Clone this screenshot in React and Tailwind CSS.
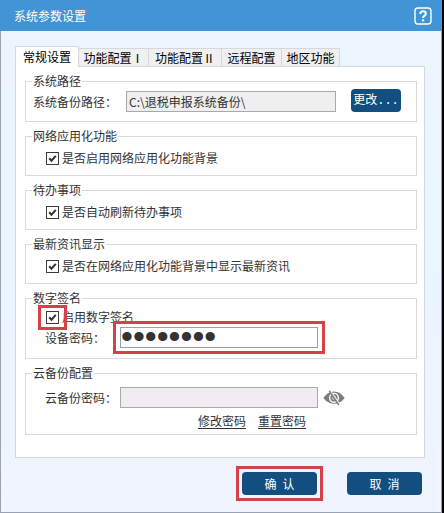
import React, { useState } from "react";

const tabs = [
    { name: "常规设置", width: "w-16" },
    { name: "功能配置Ⅰ", width: "w-[70px]" },
    { name: "功能配置Ⅱ", width: "w-[73px]" },
    { name: "远程配置", width: "w-[60px]" },
    { name: "地区功能", width: "w-[58px]" },
];

function Group({ title, children }) {
    return (
        <fieldset className="min-w-0 border border-[#d9d9db] px-[7px]">
            <legend className="-ml-px px-px leading-4">{title}</legend>
            {children}
        </fieldset>
    );
}

function CheckRow({ id, label, marked }) {
    return (
        <div className="ml-[13px] flex h-4 items-center gap-[3px]">
            <span className="relative flex">
                <input
                    type="checkbox"
                    id={id}
                    defaultChecked
                    className="peer size-[13px] appearance-none border border-[#3c3c3c] bg-white"
                />
                <svg
                    viewBox="0 0 13 13"
                    className="pointer-events-none absolute inset-0 hidden size-[13px] peer-checked:block"
                >
                    <path d="M3.2 6.2 L5.5 8.7 L9.8 3.9" fill="none" stroke="#333" strokeWidth="2" />
                </svg>
                {marked && (
                    <span className="pointer-events-none absolute -inset-x-2 -inset-y-[6px] z-10 border-3 border-[#d64048]" />
                )}
            </span>
            <label htmlFor={id}>{label}</label>
        </div>
    );
}

function HiddenEye() {
    return (
        <svg viewBox="0 0 22 16" className="h-4 w-[22px]">
            <path d="M0.3 8 Q5 1.6 11 1.6 Q17 1.6 21.7 8 Q17 13.8 11 13.8 Q5 13.8 0.3 8Z" fill="#7d7d7d" />
            <circle cx="11" cy="7.8" r="4.4" fill="none" stroke="#fff" strokeWidth="1.4" />
            <circle cx="11" cy="7.8" r="1.8" fill="none" stroke="#d8d8d8" strokeWidth="0.9" />
            <path d="M7.4 0.8 L16.8 14.6" stroke="#fff" strokeWidth="1.2" />
            <path d="M6.2 0.6 L15.8 15" stroke="#7d7d7d" strokeWidth="1.4" />
        </svg>
    );
}

export default function App() {
    const [active, setActive] = useState(0);

    return (
        <div className="min-h-screen bg-black pr-[2px] font-['Noto_Sans_CJK_SC',sans-serif] text-xs leading-4 text-[#333]">
            <div className="flex min-h-screen flex-col border-x border-b border-[#98a2b3] bg-linear-to-b from-[#edf5fe] via-[#eaf5fe] to-[#f0f4fe]">
                {/* Title bar */}
                <header className="-mx-px flex h-[31px] items-center justify-between bg-[#4195d6] pr-[10px] pl-[14px] text-white">
                    <h1>系统参数设置</h1>
                    <button type="button" aria-label="帮助">
                        <svg viewBox="0 0 18 18" className="size-[18px]" fill="none" stroke="#fff">
                            <rect x="1" y="1" width="16" height="16" rx="3" strokeWidth="1.4" />
                            <path d="M6.3 7 Q6.3 4.3 9 4.3 Q11.8 4.3 11.8 6.7 Q11.8 8 10.3 8.8 Q9.1 9.5 9.1 11" strokeWidth="2" />
                            <path d="M9.1 12.3 V14.4" strokeWidth="2.2" />
                        </svg>
                    </button>
                </header>

                {/* Tabs */}
                <div role="tablist" className="mx-[14px] mt-[15px] flex items-end text-black">
                    {tabs.map((tab, i) => (
                        <button
                            key={tab.name}
                            type="button"
                            role="tab"
                            aria-selected={active === i}
                            onClick={() => setActive(i)}
                            className={
                                tab.width +
                                (active === i
                                    ? " relative z-10 -mb-px h-[21px] border border-b-0 border-[#d5d8dc] bg-white"
                                    : " h-[18px] border-t border-r border-[#d5d8dc] bg-[#f0f0f2]")
                            }
                        >
                            {tab.name}
                        </button>
                    ))}
                </div>

                <main className="mr-[16px] ml-[14px] flex flex-col gap-[6px] border border-[#d3d6da] bg-white pt-[6px] pr-[7px] pb-[22px] pl-[9px]">
                    <Group title="系统路径">
                        <div className="flex h-8 items-start">
                            <label htmlFor="path" className="w-[93px] pt-[5px]">系统备份路径：</label>
                            <input
                                id="path"
                                readOnly
                                defaultValue="C:\退税申报系统备份\"
                                className="mt-[2px] h-[21px] w-[210px] border border-[#a9a9ab] bg-[#efeff0] px-[2px] outline-none"
                            />
                            <button
                                type="button"
                                className="ml-[15px] h-[23px] w-[50px] rounded-sm bg-[#134e80] font-['Liberation_Mono','Noto_Sans_CJK_SC',monospace] text-white"
                            >
                                更改...
                            </button>
                        </div>
                    </Group>

                    <Group title="网络应用化功能">
                        <div className="h-[31px] pt-[6px]">
                            <CheckRow id="network" label="是否启用网络应用化功能背景" />
                        </div>
                    </Group>

                    <Group title="待办事项">
                        <div className="h-[31px] pt-[6px]">
                            <CheckRow id="todo" label="是否自动刷新待办事项" />
                        </div>
                    </Group>

                    <Group title="最新资讯显示">
                        <div className="h-[31px] pt-[6px]">
                            <CheckRow id="news" label="是否在网络应用化功能背景中显示最新资讯" />
                        </div>
                    </Group>

                    <Group title="数字签名">
                        <div className="h-[52px] pt-[3px]">
                            <CheckRow id="sign" label="启用数字签名" marked />
                            <div className="mt-[2px] ml-3 flex items-center">
                                <label htmlFor="device" className="w-[75px]">设备密码：</label>
                                <span className="relative flex">
                                    <input
                                        type="password"
                                        id="device"
                                        defaultValue="12345678"
                                        className="h-[21px] w-[198px] border border-[#9c9fae] bg-white pb-[2px] font-['Liberation_Sans',sans-serif] text-[34px] leading-4 outline-none"
                                    />
                                    <span className="pointer-events-none absolute -inset-x-[7px] -inset-y-[6px] border-3 border-[#d64048]" />
                                </span>
                            </div>
                        </div>
                    </Group>

                    <Group title="云备份配置">
                        <div className="h-[53px] pt-[6px]">
                            <div className="ml-3 flex items-center">
                                <label htmlFor="cloud" className="w-[75px]">云备份密码：</label>
                                <input
                                    type="password"
                                    id="cloud"
                                    disabled
                                    className="h-[21px] w-[198px] border border-[#a9a9ab] bg-[#efedf0]"
                                />
                                <button type="button" aria-label="显示密码" className="ml-[5px]">
                                    <HiddenEye />
                                </button>
                            </div>
                            <div className="mt-[5px] ml-[165px] flex gap-3 underline underline-offset-2">
                                <a href="#change">修改密码</a>
                                <a href="#reset">重置密码</a>
                            </div>
                        </div>
                    </Group>
                </main>

                <footer className="flex justify-end gap-[30px] pt-[14px] pr-[19px] pb-[17px] text-white">
                    <span className="relative flex">
                        <button type="button" className="h-[23px] w-[75px] rounded-sm bg-[#134e80]">
                            确&ensp;认
                        </button>
                        <span className="pointer-events-none absolute -inset-[6px] border-3 border-[#d64048]" />
                    </span>
                    <button type="button" className="h-[23px] w-[75px] rounded-sm bg-[#134e80]">
                        取&ensp;消
                    </button>
                </footer>
            </div>
        </div>
    );
}
